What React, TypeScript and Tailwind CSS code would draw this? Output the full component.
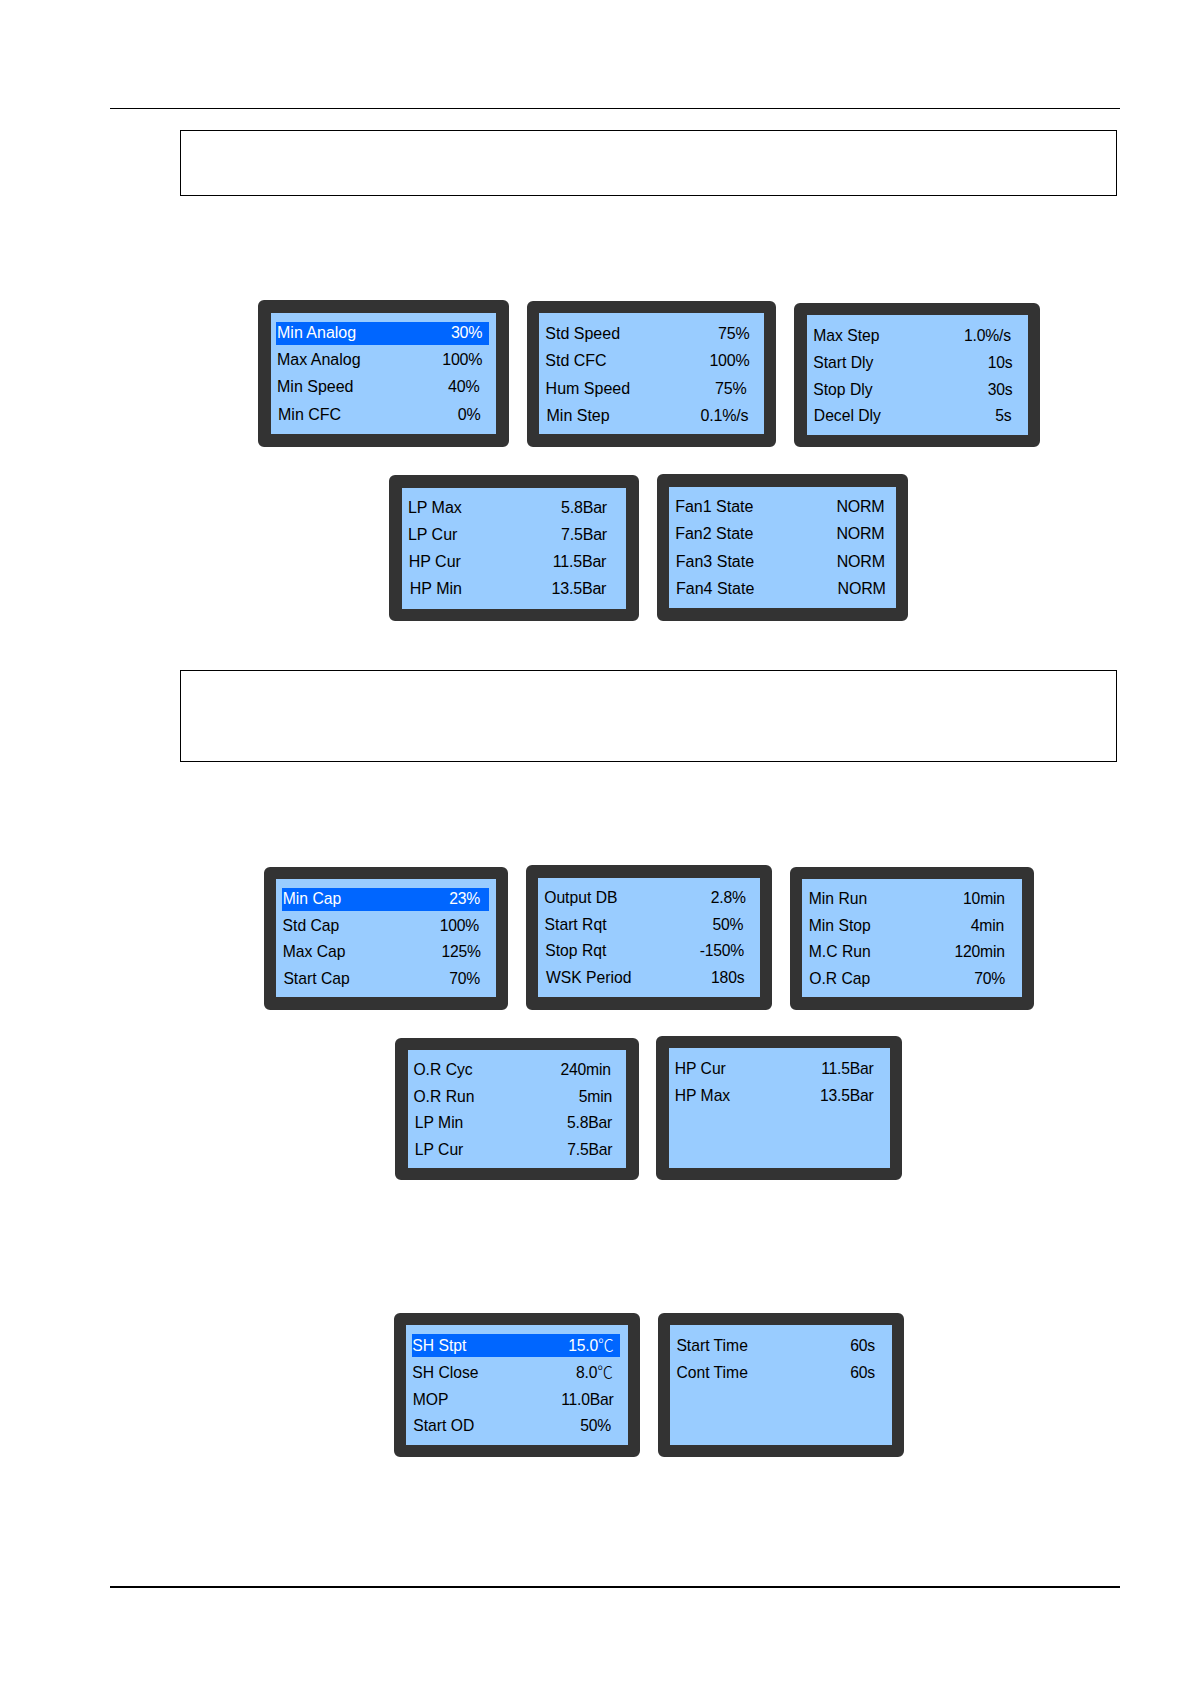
type Row = {
  label: string;
  value: string;
  left: number;
  right: number;
  active?: boolean;
};

type Screen = {
  frame: string;
  rows: Row[];
};

// left / right nudge the label and the value inside their line
const row = (label: string, value: string, left: number, right: number, active = false): Row => ({
  label,
  value,
  left,
  right,
  active,
});

const fanScreens: Screen[] = [
  {
    frame: "w-[251px] h-[147px] [border-width:13px] pt-[9px] pl-[5px] pr-[7px] text-[16px] leading-[22px] gap-[4.2px]",
    rows: [
      row("Min Analog", "30%", 1, 6.7, true),
      row("Max Analog", "100%", 1, 6.7),
      row("Min Speed", "40%", 1, 9.5),
      row("Min CFC", "0%", 2, 8.5),
    ],
  },
  {
    frame:
      "w-[249px] h-[146px] [border-width:12px_12px_13px_12px] pt-[9px] pl-[5px] pr-[7px] text-[16px] leading-[23px] gap-[4.3px]",
    rows: [
      row("Std Speed", "75%", 1.3, 7.5),
      row("Std CFC", "100%", 1.3, 7.5),
      row("Hum Speed", "75%", 1.6, 10.5),
      row("Min Step", "0.1%/s", 2.5, 8.7),
    ],
  },
  {
    frame:
      "w-[246px] h-[144px] [border-width:12px_12px_12px_13px] pt-[9px] pl-[6px] pr-[8px] text-[15.7px] leading-[23.4px] gap-[3.8px]",
    rows: [
      row("Max Step", "1.0%/s", 0.3, 9.2),
      row("Start Dly", "10s", 0.3, 7.5),
      row("Stop Dly", "30s", 0.3, 7.5),
      row("Decel Dly", "5s", 0.8, 8.7),
    ],
  },
];

const pressureScreens: Screen[] = [
  {
    frame:
      "w-[250px] h-[146px] [border-width:13px_13px_12px_13px] pt-[9px] pl-[5px] pr-[7px] text-[16px] leading-[22.4px] gap-[4.1px]",
    rows: [
      row("LP Max", "5.8Bar", 0.9, 12),
      row("LP Cur", "7.5Bar", 0.9, 12),
      row("HP Cur", "11.5Bar", 1.7, 12.8),
      row("HP Min", "13.5Bar", 2.8, 12.8),
    ],
  },
  {
    frame:
      "w-[251px] h-[147px] [border-width:13px_12px] pt-[9px] pl-[5px] pr-[7px] text-[16px] leading-[22.4px] gap-[4.3px]",
    rows: [
      row("Fan1 State", "NORM", 1.2, 4.5),
      row("Fan2 State", "NORM", 1.2, 4.5),
      row("Fan3 State", "NORM", 1.8, 4.2),
      row("Fan4 State", "NORM", 2, 3.3),
    ],
  },
];

const compressorScreens: Screen[] = [
  {
    frame:
      "w-[244px] h-[143px] [border-width:12px_12px_13px_12px] pt-[9px] pl-[6px] pr-[7px] text-[15.7px] leading-[22px] gap-[3.6px]",
    rows: [
      row("Min Cap", "23%", 0.8, 9, true),
      row("Std Cap", "100%", 0.6, 10),
      row("Max Cap", "125%", 0.8, 8.2),
      row("Start Cap", "70%", 1.4, 9),
    ],
  },
  {
    frame:
      "w-[246px] h-[145px] [border-width:13px_12px] pt-[9px] pl-[6px] pr-[7px] text-[15.7px] leading-[22px] gap-[3.7px]",
    rows: [
      row("Output DB", "2.8%", 0.2, 7.2),
      row("Start Rqt", "50%", 0.6, 9.8),
      row("Stop Rqt", "-150%", 1.3, 9),
      row("WSK Period", "180s", 2, 8.7),
    ],
  },
  {
    frame:
      "w-[244px] h-[143px] [border-width:12px_12px_13px_12px] pt-[9px] pl-[6px] pr-[7px] text-[15.7px] leading-[22px] gap-[3.6px]",
    rows: [
      row("Min Run", "10min", 0.8, 10.2),
      row("Min Stop", "4min", 0.8, 11),
      row("M.C Run", "120min", 0.8, 10.2),
      row("O.R Cap", "70%", 1.3, 10),
    ],
  },
];

const oilScreens: Screen[] = [
  {
    frame:
      "w-[244px] h-[142px] [border-width:12px_13px] pt-[9px] pl-[6px] pr-[7px] text-[15.7px] leading-[22.4px] gap-[3.5px]",
    rows: [
      row("O.R Cyc", "240min", -0.6, 8.3),
      row("O.R Run", "5min", -0.6, 7),
      row("LP Min", "5.8Bar", 0.8, 7),
      row("LP Cur", "7.5Bar", 0.8, 6.7),
    ],
  },
  {
    frame:
      "w-[246px] h-[144px] [border-width:12px_12px_12px_13px] pt-[9px] pl-[6px] pr-[8px] text-[15.7px] leading-[23px] gap-[3.8px]",
    rows: [row("HP Cur", "11.5Bar", -0.3, 8.4), row("HP Max", "13.5Bar", -0.3, 8.4)],
  },
];

const valveScreens: Screen[] = [
  {
    frame:
      "w-[246px] h-[144px] [border-width:12px] pt-[9px] pl-[6px] pr-[8px] text-[15.7px] leading-[23.4px] gap-[3.8px]",
    rows: [
      row("SH Stpt", "15.0℃", 0.3, 6.5, true),
      row("SH Close", "8.0℃", 0.3, 7.2),
      row("MOP", "11.0Bar", 0.8, 6.4),
      row("Start OD", "50%", 1.3, 9),
    ],
  },
  {
    frame:
      "w-[246px] h-[144px] [border-width:12px] pt-[9px] pl-[6px] pr-[8px] text-[15.7px] leading-[23.4px] gap-[3.8px]",
    rows: [row("Start Time", "60s", 0.4, 9), row("Cont Time", "60s", 0.4, 9)],
  },
];

function Value({ text }: { text: string }) {
  if (!text.endsWith("℃")) return <>{text}</>;
  return (
    <>
      {text.slice(0, -1)}
      <span className="font-['Noto_Sans_CJK_SC',sans-serif] leading-none font-light">℃</span>
    </>
  );
}

function Lcd({ screen }: { screen: Screen }) {
  return (
    <div className={`flex shrink-0 flex-col rounded-[6px] border-solid border-[#333333] bg-[#99ccff] ${screen.frame}`}>
      {screen.rows.map((r) => (
        <div
          key={r.label}
          className={`flex h-[23px] shrink-0 justify-between whitespace-nowrap ${
            r.active ? "bg-[#0066ff] text-white" : "text-black"
          }`}
        >
          <span style={{ marginLeft: r.left }}>{r.label}</span>
          <span className="tracking-[-0.2px]" style={{ marginRight: r.right }}>
            <Value text={r.value} />
          </span>
        </div>
      ))}
    </div>
  );
}

function ScreenRow({ screens, className }: { screens: Screen[]; className: string }) {
  return (
    <div className={`flex items-end ${className}`}>
      {screens.map((s, i) => (
        <Lcd key={i} screen={s} />
      ))}
    </div>
  );
}

export default function App() {
  return (
    <div className="flex h-[1684px] w-[1190px] flex-col bg-white pt-[108px] font-['Liberation_Sans',Arial,sans-serif]">
      <div className="ml-[110px] h-px w-[1010px] shrink-0 bg-black" />
      <div className="mt-[21px] ml-[180px] h-[66px] w-[937px] shrink-0 border border-black" />

      <ScreenRow screens={fanScreens} className="mt-[104px] ml-[258px] gap-[18px]" />
      <ScreenRow screens={pressureScreens} className="mt-[27px] ml-[389px] gap-[18px]" />

      <div className="mt-[49px] ml-[180px] h-[92px] w-[937px] shrink-0 border border-black" />

      <ScreenRow screens={compressorScreens} className="mt-[103px] ml-[264px] gap-[18px]" />
      <ScreenRow screens={oilScreens} className="mt-[26px] ml-[395px] gap-[17px]" />
      <ScreenRow screens={valveScreens} className="mt-[133px] ml-[394px] gap-[18px]" />

      <div className="mt-[129px] ml-[110px] h-[2px] w-[1010px] shrink-0 bg-black" />
    </div>
  );
}
